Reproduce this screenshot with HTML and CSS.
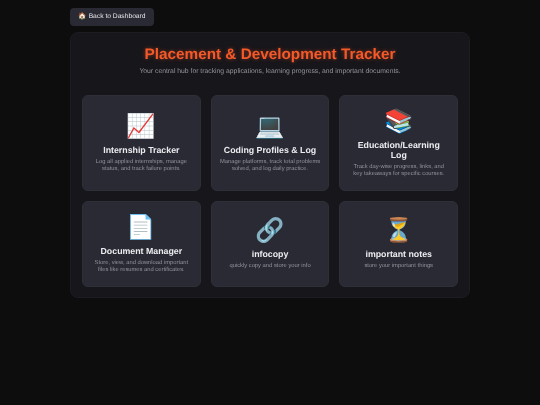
FILE: index.html
```html
<!DOCTYPE html>
<html lang="en">
<head>
<meta charset="utf-8">
<title>Placement &amp; Development Tracker</title>
<link rel="stylesheet" href="styles.css">
</head>
<body>
<main class="page">
  <a class="back" href="#">🏠 Back to Dashboard</a>
  <section class="panel">
    <header class="head">
      <h1>Placement &amp; Development Tracker</h1>
      <p>Your central hub for tracking applications, learning progress, and important documents.</p>
    </header>
    <div class="grid">
      <article class="card"><div class="icon">📈</div><h2>Internship Tracker</h2><p>Log all applied internships, manage status, and track failure points.</p></article>
      <article class="card"><div class="icon">💻</div><h2>Coding Profiles &amp; Log</h2><p>Manage platforms, track total problems solved, and log daily practice.</p></article>
      <article class="card"><div class="icon">📚</div><h2>Education/Learning Log</h2><p>Track day-wise progress, links, and key takeaways for specific courses.</p></article>
      <article class="card"><div class="icon">📄</div><h2>Document Manager</h2><p>Store, view, and download important files like resumes and certificates.</p></article>
      <article class="card"><div class="icon">🔗</div><h2>infocopy</h2><p>quickly copy and store your info</p></article>
      <article class="card"><div class="icon">⏳</div><h2>important notes</h2><p>store your important things</p></article>
    </div>
  </section>
</main>
</body>
</html>
```
FILE: styles.css
```css
* { box-sizing: border-box; }
html, body { margin: 0; height: 100%; }
body {
  background: #0d0d0e;
  font-family: "Liberation Sans", Arial, sans-serif;
  color: #e6e6ea;
  text-rendering: geometricPrecision;
}
.page { width: 400px; margin: 0 auto; padding-top: 8px; filter: blur(0.4px); }
.back {
  display: block;
  width: 84px;
  height: 18px;
  line-height: 18px;
  text-align: center;
  background: #2a2a35;
  border-radius: 4px;
  color: #e6e6ea;
  font-size: 6.7px;
  text-decoration: none;
}
.panel {
  margin-top: 6px;
  height: 266px;
  padding: 12px 11px;
  background: #16161b;
  border: 1px solid #1c1c22;
  border-radius: 8px;
}
.head { text-align: center; }
.head h1 {
  margin: 1px 0 0;
  font-size: 15.3px;
  line-height: 18px;
  font-weight: 700;
  color: #f4592a;
  text-shadow: 0 0 4px rgba(255, 87, 34, .45);
}
.head p { margin: 3px 0 0; font-size: 6.8px; line-height: 9px; color: #93939b; }
.grid {
  display: grid;
  grid-template-columns: repeat(3, 118.7px);
  grid-template-rows: 96px 86px;
  gap: 10px;
  margin-top: 19px;
  justify-content: start;
}
.card {
  display: flex;
  flex-direction: column;
  align-items: center;
  justify-content: center;
  padding: 0 9px 2px;
  background: #2a2a35;
  border: 1px solid #2f2f3a;
  border-radius: 6px;
  text-align: center;
}
.icon { margin-bottom: 4px; font-size: 23.5px; line-height: 28px; font-family: "Noto Color Emoji", sans-serif; }
.card h2 { margin: 1px 0 0; font-size: 8.8px; line-height: 10.5px; font-weight: 700; color: #ececf0; }
.card p { margin: 3.5px -1px 0; font-size: 5.8px; line-height: 6.3px; color: #93939c; }
```
